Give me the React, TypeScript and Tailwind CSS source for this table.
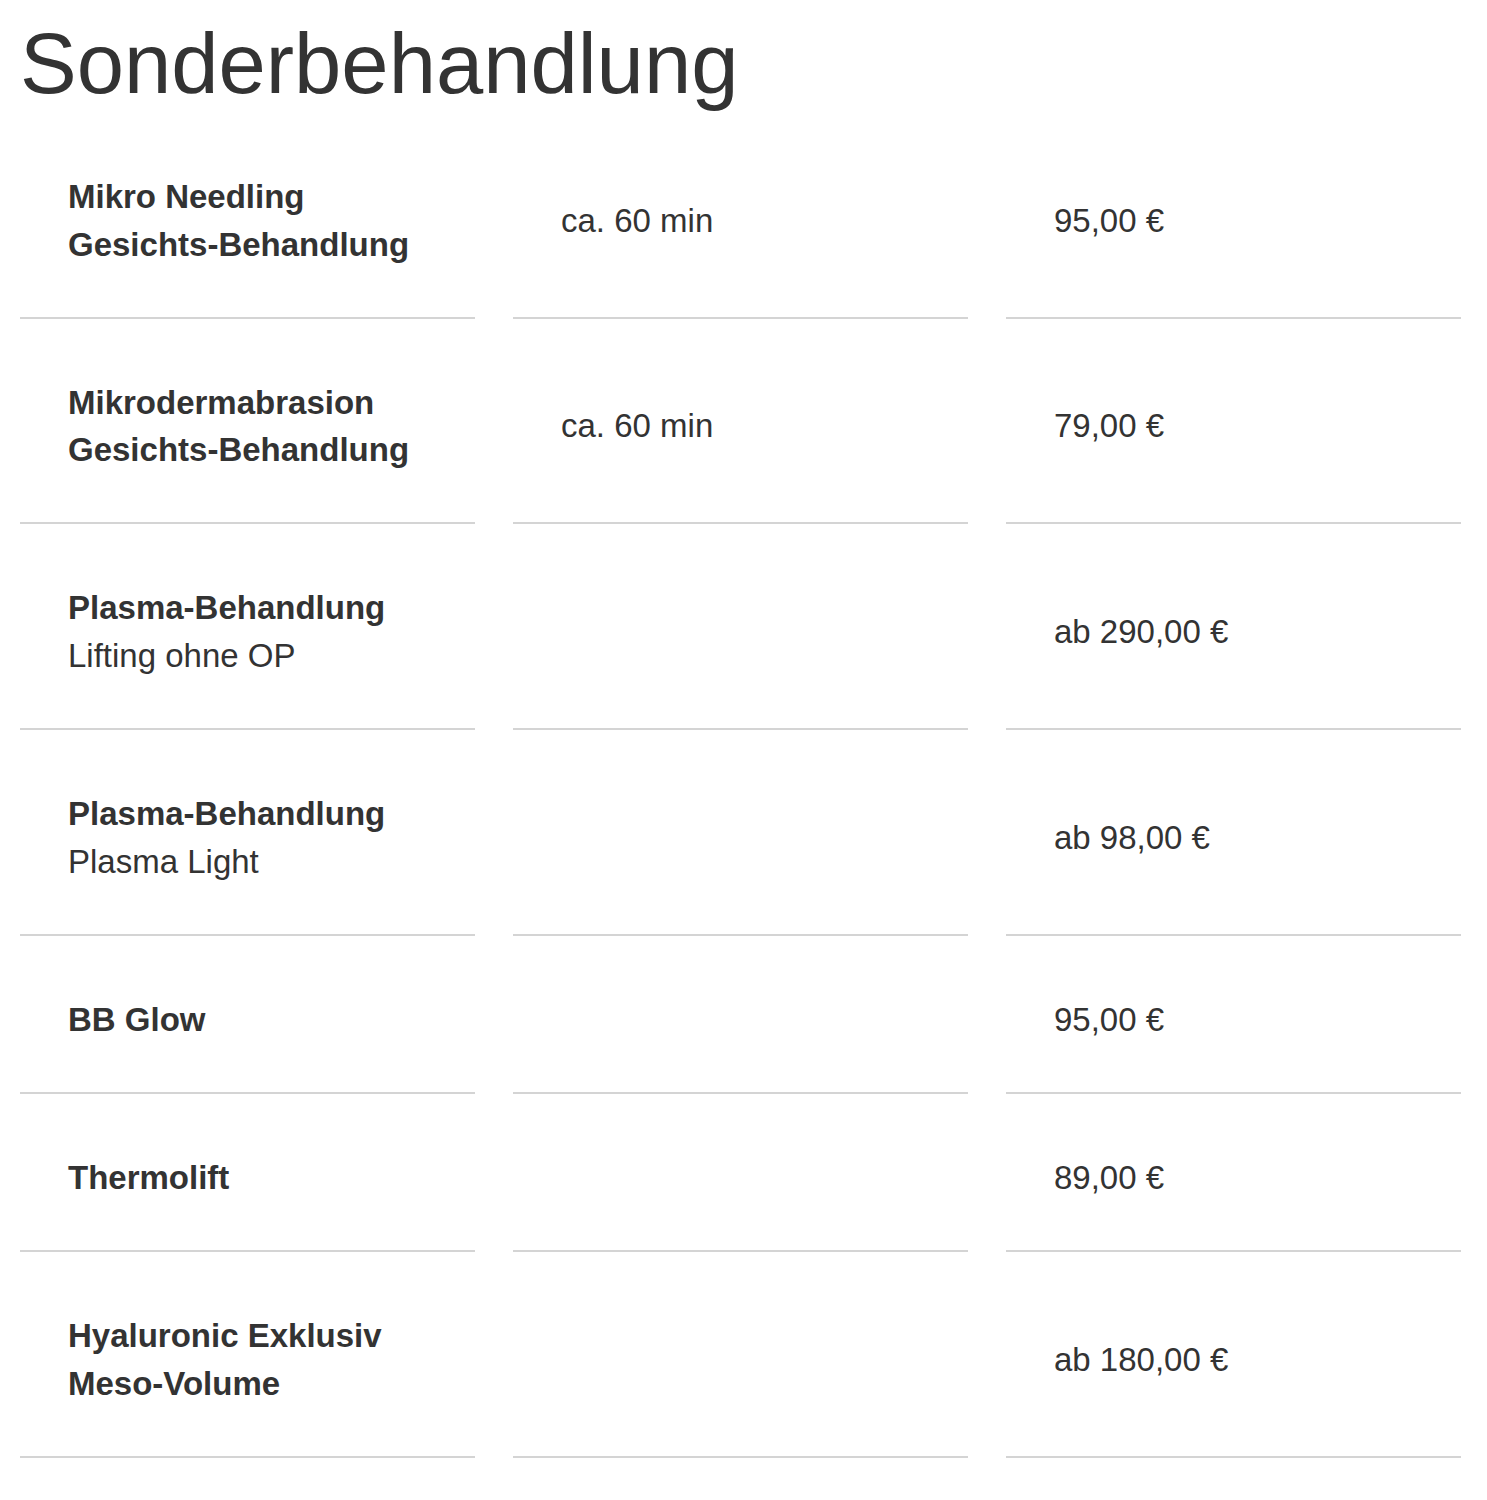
const rows: { title: string; sub?: string; subBold?: boolean; time?: string; price: string }[] = [
  { title: 'Mikro Needling', sub: 'Gesichts-Behandlung', subBold: true, time: 'ca. 60 min', price: '95,00 €' },
  { title: 'Mikrodermabrasion', sub: 'Gesichts-Behandlung', subBold: true, time: 'ca. 60 min', price: '79,00 €' },
  { title: 'Plasma-Behandlung', sub: 'Lifting ohne OP', price: 'ab 290,00 €' },
  { title: 'Plasma-Behandlung', sub: 'Plasma Light', price: 'ab 98,00 €' },
  { title: 'BB Glow', price: '95,00 €' },
  { title: 'Thermolift', price: '89,00 €' },
  { title: 'Hyaluronic Exklusiv', sub: 'Meso-Volume', subBold: true, price: 'ab 180,00 €' },
];

const cell = 'flex flex-col justify-center border-b-2 border-[#d4d4d4] px-12 pt-[60px] pb-[48.7px]';

export default function App() {
  return (
    <div className="min-h-[1500px] bg-white pl-5 pr-[26px] text-[#333333] font-['Liberation_Sans',Arial,sans-serif]">
      <h1 className="pt-[18px] text-[85px] leading-[92px] font-normal">Sonderbehandlung</h1>

      <div className="mt-[3px] grid grid-cols-3 gap-x-[38px] text-[33px] leading-[47.5px]">
        {rows.map((r, i) => (
          <div key={i} className="contents">
            <div className={cell}>
              <div className="font-bold">{r.title}</div>
              {r.sub && <div className={r.subBold ? 'font-bold' : ''}>{r.sub}</div>}
            </div>
            <div className={cell}>{r.time && <div>{r.time}</div>}</div>
            <div className={cell}>
              <div>{r.price}</div>
            </div>
          </div>
        ))}
      </div>
    </div>
  );
}
